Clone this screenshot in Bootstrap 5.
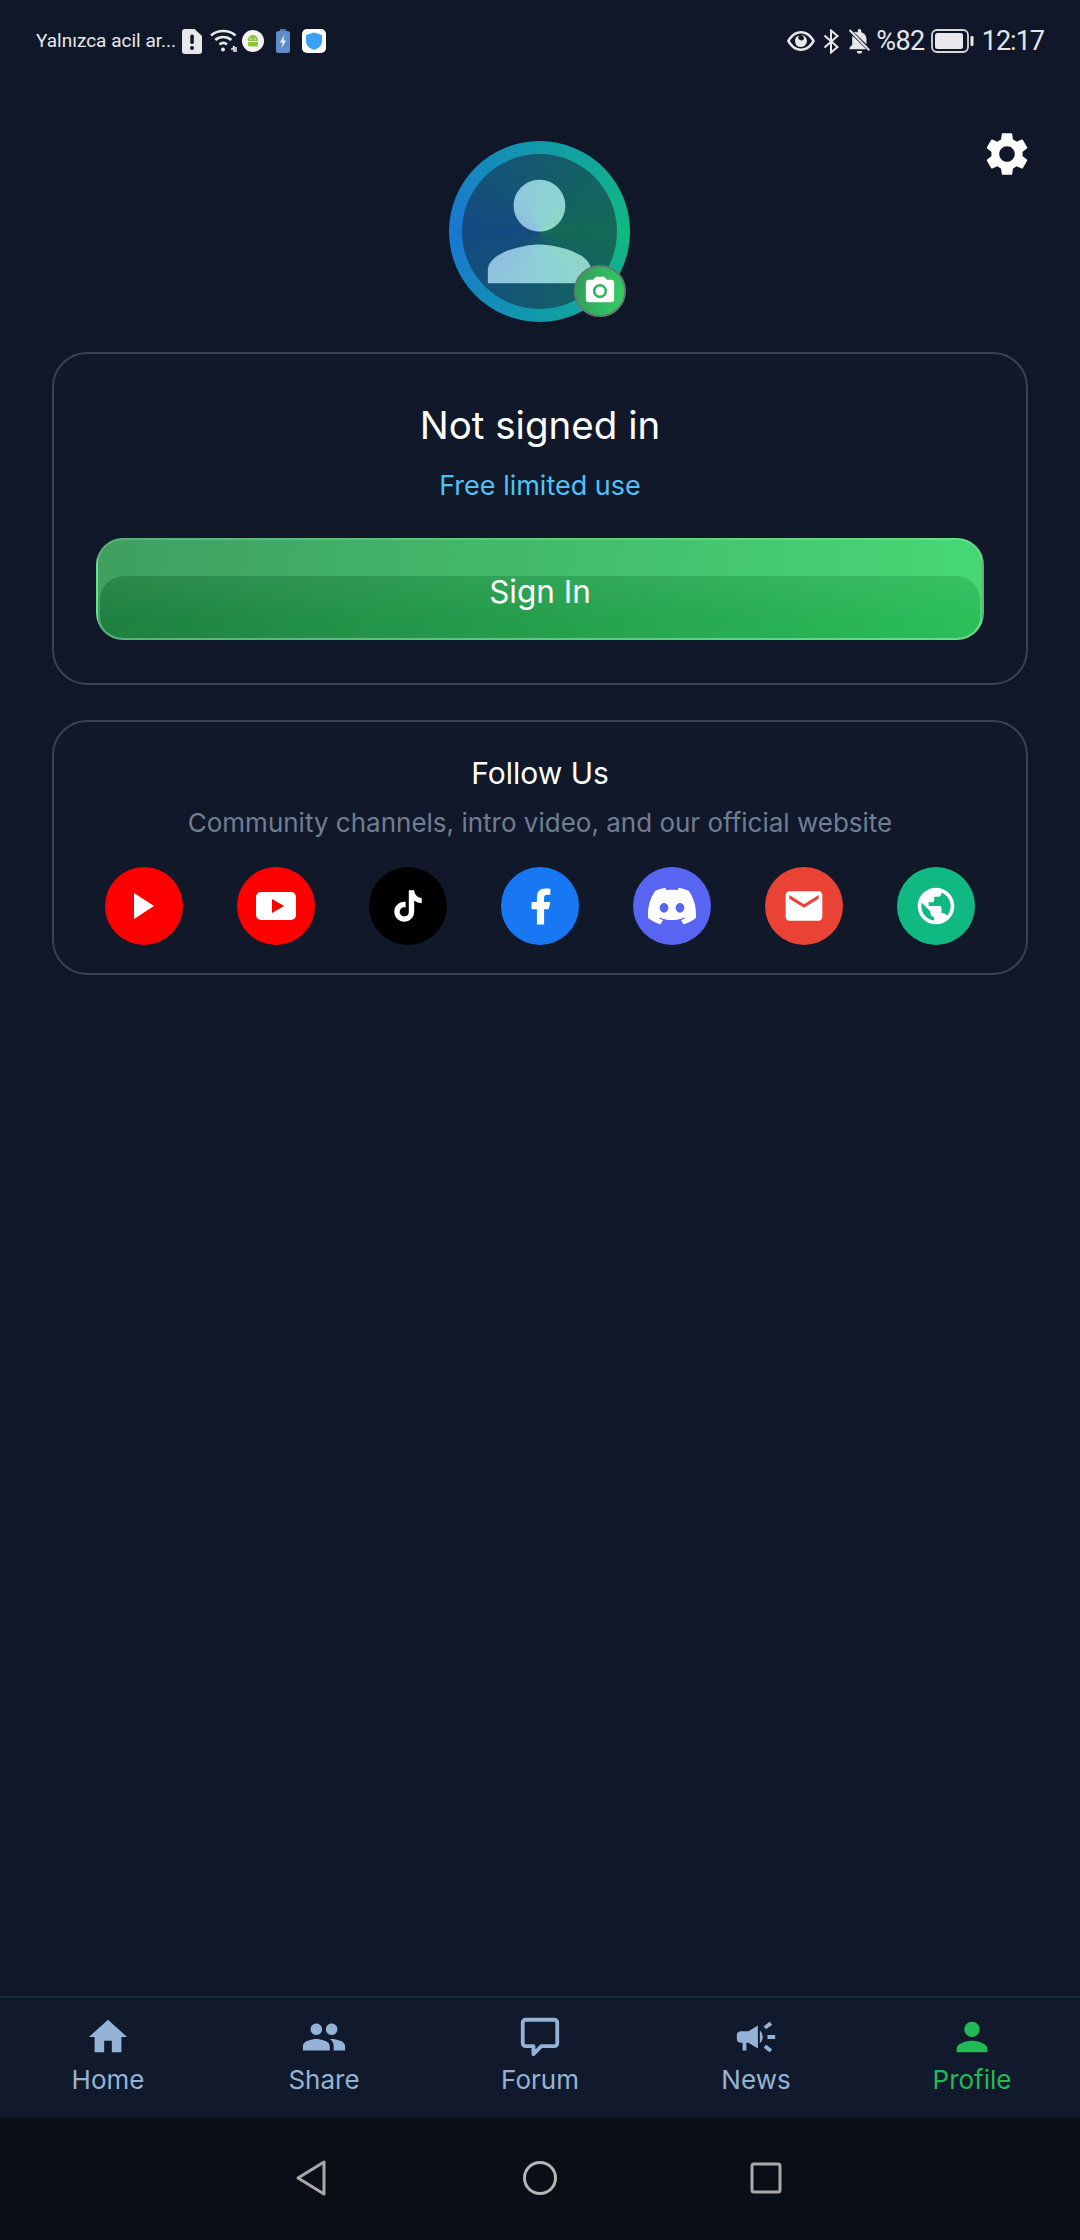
<!DOCTYPE html>
<html lang="en">
<head>
  <meta charset="UTF-8" />
  <title>Profile</title>
  <meta name="viewport" content="width=device-width, initial-scale=1" />
  <link href="https://cdn.jsdelivr.net/npm/bootstrap@5.3.0/dist/css/bootstrap.min.css" rel="stylesheet" />
  <style>
    body {
      width: 1080px;
      height: 2240px;
      overflow: hidden;
      background-color: #101728;
      font-family: Inter, "Liberation Sans", sans-serif;
      color: #fff;
    }
    .status-bar {
      height: 82px;
      padding: 0 36px;
      color: #e6e7ea;
      font-family: Roboto, "Liberation Sans", sans-serif;
    }
    .status-note { font-size: 19px; margin-right: 6px; }
    .status-num { font-size: 27px; letter-spacing: -.5px; }
    .status-time { letter-spacing: -1px; }
    .status-pct { margin: 0 6px 0 5px; }
    .avatar-row {
      display: grid;
      grid-template-columns: 1fr auto 1fr;
      padding-top: 59px;
    }
    .avatar-box { margin-left: -1px; }
    .settings-btn { justify-self: end; margin: -13px 47px 0 0; }
    .avatar-ring {
      width: 181px;
      height: 181px;
      padding: 13px;
      border-radius: 50%;
      background: conic-gradient(#129aaa, #10b981 90deg, #129aaa 180deg, #1976d2 270deg, #129aaa);
    }
    .avatar-inner {
      width: 155px;
      height: 155px;
      border-radius: 50%;
      background: conic-gradient(#155a6e, #136a56 90deg, #155a6e 180deg, #144a82 270deg, #155a6e);
    }
    .avatar-person {
      width: 155px;
      height: 155px;
      background: conic-gradient(#8ed0d6, #8fd8c2 90deg, #8ed0d6 180deg, #90b8e6 270deg, #8ed0d6);
      clip-path: url(#personClip);
    }
    .camera-badge {
      position: absolute;
      right: 4px;
      bottom: 5px;
      width: 52px;
      height: 52px;
      border-radius: 50%;
      border: 2px solid #5d7f70;
      background: linear-gradient(100deg, #2e9c58, #35cf66);
    }
    .profile-card {
      margin: 0 52px;
      background: #101829;
      border: 2px solid #3a4254;
      border-radius: 35px;
      color: #fff;
    }
    .signin-card { height: 333px; margin-top: 30px; padding: 0 42px; }
    .follow-card { height: 255px; margin-top: 35px; padding: 0 51px; }
    .signin-title { font-size: 38.5px; line-height: 46px; margin: 48px 0 0; font-weight: 400; }
    .signin-sub { font-size: 27px; line-height: 34px; margin: 21px 0 0; color: #4fc3f7; }
    .signin-btn {
      position: relative;
      display: block;
      width: 100%;
      height: 102px;
      margin-top: 35px;
      padding: 0;
      border: 2px solid rgba(255, 255, 255, .17);
      border-radius: 27px;
      background: linear-gradient(100deg, #3f9f60, #47d876);
      color: #fff;
      font-size: 31.5px;
      overflow: hidden;
    }
    .signin-btn:hover { color: #fff; border-color: rgba(255, 255, 255, .17); }
    .signin-btn-low {
      position: absolute;
      left: 2px;
      right: 2px;
      top: 36px;
      bottom: 0;
      border-radius: 24px 24px 22px 22px;
      background: linear-gradient(180deg, rgba(255, 255, 255, .06), rgba(255, 255, 255, 0) 70%),
        linear-gradient(100deg, #1f8040, #2bbf5a);
    }
    .signin-btn-label { position: relative; top: 3px; }
    .follow-title { font-size: 30px; line-height: 36px; margin: 33px 0 0; font-weight: 400; }
    .follow-sub { font-size: 26px; line-height: 32px; margin: 16px 0 0; color: #707e92; }
    .social-row { margin-top: 28px; gap: 54px; }
    .social-btn {
      width: 78px;
      height: 78px;
      flex: none;
      border-radius: 50%;
    }
    .social-red { background: #ff0000; }
    .social-black { background: #000; }
    .social-fb { background: #1877f2; }
    .social-discord { background: #5865f2; }
    .social-mail { background: #ea4335; }
    .social-web { background: #10b981; }
    .tab-bar {
      height: 122px;
      background: #111a2c;
      border-top: 2px solid #16293a;
      margin-top: auto;
    }
    .tab-item {
      width: 216px;
      padding-top: 16px;
      color: #94b3d6;
      font-size: 26px;
      line-height: 34px;
    }
    .tab-item svg { display: block; margin-bottom: 3px; }
    .tab-active { color: #22b957; }
    .sys-nav { height: 122px; background: #0a0e17; padding-right: 3px; }
    .sys-icon { position: relative; top: -1px; }
    .sys-mid { margin: 0 192px 0 195px; }
  </style>
</head>
<body class="d-flex flex-column">

<svg width="0" height="0" class="position-absolute">
  <defs>
    <clipPath id="personClip" clipPathUnits="userSpaceOnUse">
      <path transform="scale(6.458)" d="M12 12c2.21 0 4-1.79 4-4s-1.79-4-4-4-4 1.79-4 4 1.79 4 4 4zm0 2c-2.67 0-8 1.34-8 4v2h16v-2c0-2.66-5.33-4-8-4z"/>
    </clipPath>
  </defs>
</svg>

<div class="status-bar d-flex align-items-center">
  <span class="status-note">Yalnızca acil ar...</span>
  <svg width="20" height="25" viewBox="0 0 20 25" class="me-2"><path fill="#e8e8ea" d="M3 0h9.500l7.500 7v15a3 3 0 0 1-3 3H3a3 3 0 0 1-3-3V3a3 3 0 0 1 3-3z"/><rect x="8.300" y="5.500" width="3.500" height="9.500" rx="1.500" fill="#101728"/><circle cx="10" cy="19" r="2" fill="#101728"/></svg>
  <svg width="28" height="24" viewBox="0 0 28 24" class="me-1" fill="none" stroke="#e8e8ea" stroke-width="2.600"><path d="M1 6.500C7.500.5 19 .5 25.500 6.500"/><path d="M5.300 11c4.500-4 11.500-4 16 0"/><path d="M9.500 15.500c2.300-2 5.300-2 7.500 0"/><circle cx="13" cy="20.500" r="2" fill="#e8e8ea" stroke="none"/><path d="M21 20h2l1-3v6M26 18v5" stroke-width="1.600"/></svg>
  <svg width="22" height="22" viewBox="0 0 22 22" class="me-2"><circle cx="11" cy="11" r="11" fill="#f4f4f4"/><path fill="#8cc63f" d="M6 10a5 5 0 0 1 10 0v1H6zM6 12h10v3a1.500 1.500 0 0 1-1.500 1.500h-7A1.500 1.500 0 0 1 6 15z"/><circle cx="9" cy="9" r=".8" fill="#f4f4f4"/><circle cx="13" cy="9" r=".8" fill="#f4f4f4"/></svg>
  <svg width="14" height="24" viewBox="0 0 14 24" class="ms-1 me-2"><rect x="4" y="0" width="6" height="2" fill="#4f78ad"/><rect x="0" y="2" width="14" height="22" rx="2.500" fill="#5e8cc6"/><path fill="#e8eef6" d="M8.500 6 3.800 13.500h2.700L5.500 19l4.700-7.500H7.500z"/></svg>
  <svg width="24" height="24" viewBox="0 0 24 24" class="ms-1"><rect width="24" height="24" rx="5" fill="#fff"/><path fill="#3aa0f5" d="M12 3.500l8 2.500v6c0 4.500-3.500 7.500-8 9-4.500-1.500-8-4.500-8-9V6z"/></svg>

  <div class="ms-auto d-flex align-items-center">
    <svg width="28" height="20" viewBox="0 0 28 20" class="me-2"><path fill="#e8e8ea" fill-rule="evenodd" d="M14 0c6 0 11 4 14 10-3 6-8 10-14 10S3 16 0 10C3 4 8 0 14 0zm0 2.500C9.500 2.500 5.600 5.400 3 10c2.600 4.600 6.500 7.500 11 7.500S22.400 14.600 25 10c-2.600-4.600-6.500-7.500-11-7.500zM14 4a6 6 0 1 1 0 12 6 6 0 0 1-1.500-11.800L12 4.500a3 3 0 0 0 2 5 3 3 0 0 0 3-3A6 6 0 0 0 14 4z"/></svg>
    <svg width="17" height="25" viewBox="0 0 16 25" class="me-2" fill="none" stroke="#e8e8ea" stroke-width="2"><path d="M1 6.500 14 18l-6.500 5.500v-22L14 7 1 18.500"/></svg>
    <svg width="23" height="25" viewBox="0 0 21 24"><path fill="#e8e8ea" d="M10.500 0c1 0 1.700.7 1.700 1.700V3c3.300.8 5 3.700 5 7v4.700L5 2.800C5.800 2 6.800 3.300 8.800 3V1.700C8.800.7 9.500 0 10.500 0zM3.800 6.500 17 19.500H1v-1.800l2.500-2.500V10c0-1.200 0-2.500.3-3.500zM8 21h5a2.500 2.500 0 0 1-5 0z"/><path stroke="#e8e8ea" stroke-width="2" d="M1 1l19 19.500"/></svg>
    <span class="status-num status-pct">%82</span>
    <svg width="43" height="24" viewBox="0 0 43 24" class="me-2"><rect x="1" y="1" width="36" height="22" rx="5" fill="none" stroke="#d8d9dc" stroke-width="1.800"/><rect x="4" y="4" width="28" height="16" rx="2.500" fill="#e8e8ea"/><rect x="39.500" y="7" width="3" height="10" rx="1.200" fill="#e8e8ea"/></svg>
    <span class="status-num status-time">12:17</span>
  </div>
</div>

<div class="avatar-row">
  <div></div>
  <div class="avatar-box position-relative">
    <div class="avatar-ring">
      <div class="avatar-inner"><div class="avatar-person"></div></div>
    </div>
    <div class="camera-badge d-flex align-items-center justify-content-center">
      <svg width="34" height="34" viewBox="0 0 24 24" fill="#fff"><circle cx="12" cy="12" r="3.200"/><path d="M9 2L7.170 4H4c-1.100 0-2 .9-2 2v12c0 1.100.9 2 2 2h16c1.100 0 2-.9 2-2V6c0-1.100-.9-2-2-2h-3.170L15 2H9zm3 15c-2.760 0-5-2.240-5-5s2.240-5 5-5 5 2.240 5 5-2.240 5-5 5z"/></svg>
    </div>
  </div>
  <div class="settings-btn">
    <svg width="52" height="52" viewBox="0 0 24 24" fill="#fff"><path d="M19.140 12.940c.04-.3.06-.61.06-.94 0-.32-.02-.64-.07-.94l2.030-1.580c.18-.14.23-.41.12-.61l-1.920-3.320c-.12-.22-.37-.29-.59-.22l-2.390.96c-.5-.38-1.030-.7-1.620-.94l-.36-2.540c-.04-.24-.24-.41-.48-.41h-3.840c-.24 0-.43.17-.47.41l-.36 2.540c-.59.24-1.130.57-1.620.94l-2.390-.96c-.22-.08-.47 0-.59.22L2.740 8.870c-.12.21-.08.47.12.61l2.030 1.580c-.05.3-.09.63-.09.94s.02.64.07.94l-2.030 1.580c-.18.14-.23.41-.12.61l1.920 3.320c.12.22.37.29.59.22l2.390-.96c.5.38 1.030.7 1.620.94l.36 2.540c.05.24.24.41.48.41h3.840c.24 0 .44-.17.47-.41l.36-2.540c.59-.24 1.130-.56 1.620-.94l2.390.96c.22.08.47 0 .59-.22l1.920-3.320c.12-.22.07-.47-.12-.61l-2.010-1.580zM12 15.600c-1.980 0-3.600-1.620-3.600-3.600s1.620-3.600 3.600-3.600 3.600 1.620 3.600 3.600-1.620 3.600-3.600 3.600z"/></svg>
  </div>
</div>

<div class="card profile-card signin-card text-center">
  <h5 class="signin-title">Not signed in</h5>
  <p class="signin-sub">Free limited use</p>
  <button class="btn signin-btn">
    <span class="signin-btn-low"></span>
    <span class="signin-btn-label">Sign In</span>
  </button>
</div>

<div class="card profile-card follow-card text-center">
  <h5 class="follow-title">Follow Us</h5>
  <p class="follow-sub">Community channels, intro video, and our official website</p>
  <div class="social-row d-flex">
    <div class="social-btn social-red d-flex align-items-center justify-content-center">
      <svg width="20" height="26" viewBox="0 0 20 26"><path fill="#fff" d="M0 0l20 13L0 26z"/></svg>
    </div>
    <div class="social-btn social-red d-flex align-items-center justify-content-center">
      <svg width="40" height="28" viewBox="0 0 40 28"><rect width="40" height="28" rx="5" fill="#fff"/><path fill="#ff0000" d="M16 7l12 7-12 7z"/></svg>
    </div>
    <div class="social-btn social-black d-flex align-items-center justify-content-center">
      <svg width="42" height="42" viewBox="0 0 24 24"><path fill="#fff" d="M16.600 5.820s.51.5 0 0A4.278 4.278 0 0 1 15.540 3h-3.090v12.400a2.592 2.592 0 0 1-2.590 2.500c-1.420 0-2.600-1.160-2.600-2.600 0-1.720 1.660-3.010 3.370-2.480V9.660c-3.450-.46-6.470 2.220-6.470 5.640 0 3.330 2.760 5.700 5.690 5.700 3.140 0 5.690-2.550 5.690-5.700V9.010a7.350 7.350 0 0 0 4.300 1.380V7.300s-1.880.09-3.240-1.480z"/></svg>
    </div>
    <div class="social-btn social-fb d-flex align-items-center justify-content-center">
      <svg width="43" height="43" viewBox="0 0 24 24"><path fill="#fff" d="M14 13.500h2.500l1-4H14v-2c0-1.030 0-2 2-2h1.500V2.140c-.326-.043-1.557-.14-2.857-.14C11.928 2 10 3.657 10 6.700v2.800H7v4h3V22h4v-8.500z"/></svg>
    </div>
    <div class="social-btn social-discord d-flex align-items-center justify-content-center">
      <svg width="48" height="48" viewBox="0 0 24 24"><path fill="#fff" d="M20.317 4.3698a19.7913 19.7913 0 00-4.8851-1.5152.0741.0741 0 00-.0785.0371c-.211.3753-.4447.8648-.6083 1.2495-1.8447-.2762-3.68-.2762-5.4868 0-.1636-.3933-.4058-.8742-.6177-1.2495a.077.077 0 00-.0785-.037 19.7363 19.7363 0 00-4.8852 1.515.0699.0699 0 00-.0321.0277C.5334 9.0458-.319 13.5799.0992 18.0578a.0824.0824 0 00.0312.0561c2.0528 1.5076 4.0413 2.4228 5.9929 3.0294a.0777.0777 0 00.0842-.0276c.4616-.6304.8731-1.2952 1.226-1.9942a.076.076 0 00-.0416-.1057c-.6528-.2476-1.2743-.5495-1.8722-.8923a.077.077 0 01-.0076-.1277c.1258-.0943.2517-.1923.3718-.2914a.0743.0743 0 01.0776-.0105c3.9278 1.7933 8.18 1.7933 12.0614 0a.0739.0739 0 01.0785.0095c.1202.099.246.1981.3728.2924a.077.077 0 01-.0066.1276 12.2986 12.2986 0 01-1.873.8914.0766.0766 0 00-.0407.1067c.3604.698.7719 1.3628 1.225 1.9932a.076.076 0 00.0842.0286c1.961-.6067 3.9495-1.5219 6.0023-3.0294a.077.077 0 00.0313-.0552c.5004-5.177-.8382-9.6739-3.5485-13.6604a.061.061 0 00-.0312-.0286zM8.020 15.3312c-1.1825 0-2.1569-1.0857-2.1569-2.419 0-1.3332.9555-2.4189 2.157-2.4189 1.2108 0 2.1757 1.0952 2.1568 2.419 0 1.3332-.9555 2.4189-2.1569 2.4189zm7.9748 0c-1.1825 0-2.1569-1.0857-2.1569-2.419 0-1.3332.9554-2.4189 2.1569-2.4189 1.2108 0 2.1757 1.0952 2.1568 2.419 0 1.3332-.946 2.4189-2.1568 2.4189Z"/></svg>
    </div>
    <div class="social-btn social-mail d-flex align-items-center justify-content-center">
      <svg width="44" height="44" viewBox="0 0 24 24"><path fill="#fff" d="M20 4H4c-1.100 0-1.990.9-1.990 2L2 18c0 1.100.9 2 2 2h16c1.100 0 2-.9 2-2V6c0-1.100-.9-2-2-2zm0 4l-8 5-8-5V6l8 5 8-5v2z"/></svg>
    </div>
    <div class="social-btn social-web d-flex align-items-center justify-content-center">
      <svg width="44" height="44" viewBox="0 0 24 24"><path fill="#fff" d="M12 2C6.480 2 2 6.480 2 12s4.480 10 10 10 10-4.480 10-10S17.520 2 12 2zm-1 17.930c-3.950-.49-7-3.850-7-7.930 0-.62.08-1.210.21-1.790L9 15v1c0 1.100.9 2 2 2v1.930zm6.900-2.540c-.26-.81-1-1.390-1.900-1.390h-1v-3c0-.55-.45-1-1-1H8v-2h2c.55 0 1-.45 1-1V7h2c1.100 0 2-.9 2-2v-.41c2.930 1.190 5 4.060 5 7.410 0 2.080-.8 3.970-2.100 5.390z"/></svg>
    </div>
  </div>
</div>

<nav class="tab-bar d-flex">
  <div class="tab-item d-flex flex-column align-items-center">
    <svg width="46" height="46" viewBox="0 0 24 24" fill="currentColor"><path d="M10 20v-6h4v6h5v-8h3L12 3 2 12h3v8z"/></svg>
    <span>Home</span>
  </div>
  <div class="tab-item d-flex flex-column align-items-center">
    <svg width="46" height="46" viewBox="0 0 24 24" fill="currentColor"><path d="M16 11c1.660 0 2.990-1.340 2.990-3S17.660 5 16 5c-1.660 0-3 1.340-3 3s1.340 3 3 3zm-8 0c1.660 0 2.990-1.340 2.990-3S9.660 5 8 5C6.340 5 5 6.340 5 8s1.340 3 3 3zm0 2c-2.330 0-7 1.170-7 3.500V19h14v-2.500c0-2.330-4.670-3.500-7-3.500zm8 0c-.29 0-.62.02-.97.05 1.160.84 1.970 1.970 1.970 3.450V19h6v-2.500c0-2.330-4.670-3.500-7-3.500z"/></svg>
    <span>Share</span>
  </div>
  <div class="tab-item d-flex flex-column align-items-center">
    <svg width="46" height="46" viewBox="0 0 24 24" fill="none" stroke="currentColor" stroke-width="2"><path stroke-linejoin="round" d="M4.500 3h15A1.500 1.500 0 0 1 21 4.500v10.800a1.500 1.500 0 0 1-1.500 1.500h-6.900L8.600 21v-4.200H4.500A1.500 1.500 0 0 1 3 15.300V4.500A1.500 1.500 0 0 1 4.500 3z"/></svg>
    <span>Forum</span>
  </div>
  <div class="tab-item d-flex flex-column align-items-center">
    <svg width="46" height="46" viewBox="0 0 24 24" fill="currentColor"><path d="M18 11v2h4v-2h-4zm-2 6.610c.96.71 2.210 1.650 3.200 2.390.4-.53.8-1.070 1.200-1.600-.99-.74-2.240-1.680-3.200-2.400-.4.54-.8 1.080-1.200 1.610zM20.400 5.600c-.4-.53-.8-1.070-1.200-1.600-.99.74-2.240 1.680-3.200 2.400.4.53.8 1.070 1.200 1.600.96-.72 2.210-1.650 3.200-2.400zM4 9c-1.100 0-2 .9-2 2v2c0 1.100.9 2 2 2h1v4h2v-4h1l5 3V6L8 9H4zm11.500 3c0-1.330-.58-2.530-1.500-3.350v6.690c.92-.81 1.500-2.010 1.500-3.340z"/></svg>
    <span>News</span>
  </div>
  <div class="tab-item tab-active d-flex flex-column align-items-center">
    <svg width="46" height="46" viewBox="0 0 24 24" fill="currentColor"><path d="M12 12c2.210 0 4-1.790 4-4s-1.790-4-4-4-4 1.790-4 4 1.790 4 4 4zm0 2c-2.670 0-8 1.340-8 4v2h16v-2c0-2.660-5.330-4-8-4z"/></svg>
    <span>Profile</span>
  </div>
</nav>

<div class="sys-nav d-flex align-items-center justify-content-center">
  <svg class="sys-icon" width="32" height="38" viewBox="0 0 32 38" fill="none" stroke="#a9a9a9" stroke-width="3" stroke-linejoin="round"><path d="M29 3v32L3 19z"/></svg>
  <svg class="sys-icon sys-mid" width="36" height="36" viewBox="0 0 36 36" fill="none" stroke="#b5b5b5" stroke-width="3"><circle cx="18" cy="18" r="15.500"/></svg>
  <svg class="sys-icon" width="32" height="32" viewBox="0 0 32 32" fill="none" stroke="#a9a9a9" stroke-width="3"><rect x="2" y="2" width="28" height="28" rx="2"/></svg>
</div>

<script src="https://cdn.jsdelivr.net/npm/bootstrap@5.3.0/dist/js/bootstrap.bundle.min.js"></script>
</body>
</html>
